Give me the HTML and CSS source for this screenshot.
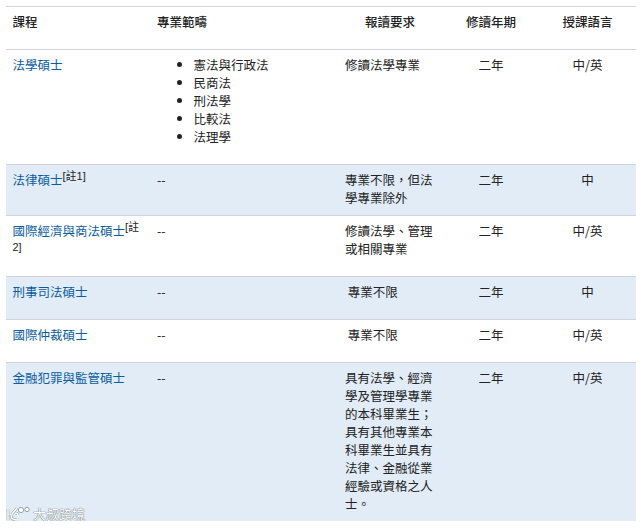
FILE: index.html
```html
<!DOCTYPE html>
<html lang="zh-Hant">
<head>
<meta charset="utf-8">
<title>課程</title>
<link rel="stylesheet" href="styles.css">
</head>
<body>
<main class="page">
<table class="courses">
<colgroup><col class="c1"><col class="c2"><col class="c3"><col class="c4"><col class="c5"></colgroup>
<thead>
<tr class="h43"><th class="left first">課程</th><th class="left">專業範疇</th><th>報讀要求</th><th>修讀年期</th><th class="lang">授課語言</th></tr>
</thead>
<tbody>
<tr class="h115"><td class="first"><a href="#">法學碩士</a></td><td><ul><li>憲法與行政法</li><li>民商法</li><li>刑法學</li><li>比較法</li><li>法理學</li></ul></td><td>修讀法學專業</td><td class="mid">二年</td><td class="mid lang">中/英</td></tr>
<tr class="alt h51"><td class="first"><a href="#">法律碩士</a><sup>[註1]</sup></td><td>--</td><td>專業不限，但法學專業除外</td><td class="mid">二年</td><td class="mid lang">中</td></tr>
<tr class="h61"><td class="first"><a href="#">國際經濟與商法碩士</a><sup>[註</sup><br><sup class="cont">2]</sup></td><td>--</td><td>修讀法學、管理或相關專業</td><td class="mid">二年</td><td class="mid lang">中/英</td></tr>
<tr class="alt h43"><td class="first"><a href="#">刑事司法碩士</a></td><td>--</td><td>&nbsp;專業不限</td><td class="mid">二年</td><td class="mid lang">中</td></tr>
<tr class="h43"><td class="first"><a href="#">國際仲裁碩士</a></td><td>--</td><td>&nbsp;專業不限</td><td class="mid">二年</td><td class="mid lang">中/英</td></tr>
<tr class="alt"><td class="first"><a href="#">金融犯罪與監管碩士</a></td><td>--</td><td>具有法學、經濟學及管理學專業的本科畢業生；具有其他專業本科畢業生並具有法律、金融從業經驗或資格之人士。</td><td class="mid">二年</td><td class="mid lang">中/英</td></tr>
</tbody>
</table>
<div class="mark">
<svg class="mark-logo" width="25" height="16" viewBox="0 0 25 16" aria-hidden="true"><path d="M2 3v11M5 9c0 4 3 5 6 5M6 8l5-6M9 7c2 0 3 1 3 2" fill="none" stroke="#8d969e" stroke-width="2.6"/><path d="M2 3v11M5 9c0 4 3 5 6 5M6 8l5-6M9 7c2 0 3 1 3 2" fill="none" stroke="#fff" stroke-width="1.5"/><circle cx="15" cy="4" r="2.6" fill="#fff" stroke="#98a1a8"/><circle cx="21" cy="3.5" r="2.2" fill="#fff" stroke="#98a1a8"/></svg>
<span class="mark-text">大叔跨境</span>
</div>
</main>
</body>
</html>
```
FILE: styles.css
```css
html, body { margin: 0; padding: 0; background: #fff; }
.page {
  position: relative;
  padding: 6px 6px 0;
  font-family: "Noto Sans CJK TC", "Liberation Sans", sans-serif;
  font-size: 12.5px;
  line-height: 18px;
  color: #222;
}
.courses {
  width: 630px;
  table-layout: fixed;
  border-collapse: collapse;
  border-top: 1px solid #d3d6da;
}
.c1 { width: 144px; }
.c2 { width: 188px; }
.c3 { width: 104px; }
.c4 { width: 98px; }
.c5 { width: 96px; }
th, td {
  padding: 6px 7px 8px;
  vertical-align: top;
  text-align: left;
  border-bottom: 1px solid #d0d4d8;
}
tbody tr:last-child td { border-bottom: 0; }
th { font-weight: 500; text-align: center; color: #222; }
th.left { text-align: left; }
td.mid { text-align: center; }
.first { padding-left: 6.5px; }
.lang { padding-right: 8px; }
.alt td { background: #e1ecf6; }
.h43 { height: 43px; }
.h51 { height: 51px; }
.h61 { height: 61px; }
.h115 { height: 115px; }
a { color: #0b5c9e; text-decoration: none; }
sup {
  font-family: "Liberation Sans", "Noto Sans CJK TC", sans-serif;
  font-size: 11px;
  line-height: 0;
  vertical-align: 5px;
  color: #222;
}
sup.cont { vertical-align: 3px; }
ul { margin: 0 0 10px; padding: 0 0 0 36.5px; }
li { padding: 0; }
.mark {
  position: absolute;
  left: 6px;
  top: 506px;
  display: flex;
  align-items: center;
  gap: 2px;
  height: 16px;
}
.mark-text {
  font-size: 13px;
  line-height: 16px;
  color: #fff;
  text-shadow: 0 0 1px #5f6870, 0 0 1px #5f6870;
}
```
